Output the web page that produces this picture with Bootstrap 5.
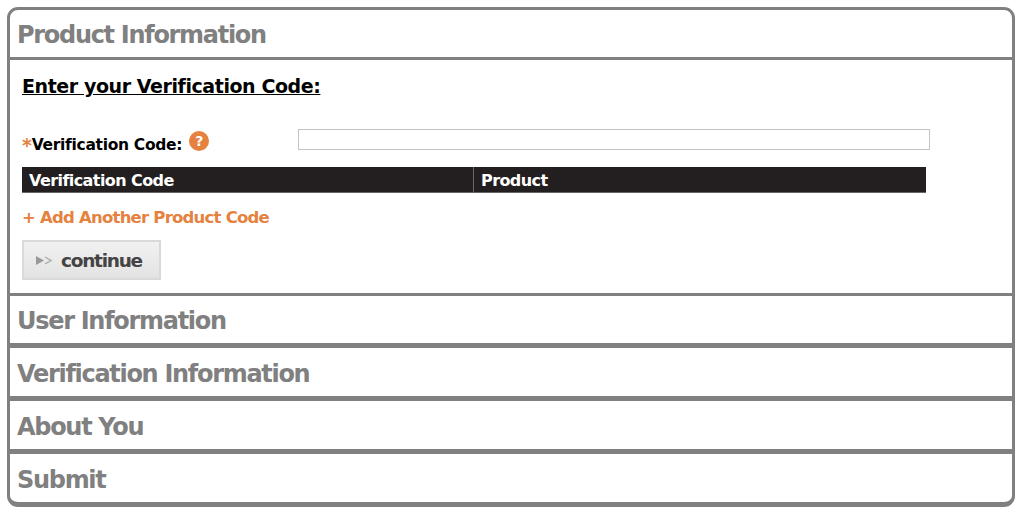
<!DOCTYPE html>
<html lang="en"><head><meta charset="utf-8"><title>Registration</title>
<link href="https://cdn.jsdelivr.net/npm/bootstrap@5.3.0/dist/css/bootstrap.min.css" rel="stylesheet">
<style>
html,body{height:520px;overflow:hidden;background:#fff}
body{font-family:"DejaVu Sans","Liberation Sans",sans-serif;font-weight:700;color:#000;padding:7px 9px 0 7px}
.shell{height:500px;border:3px solid #808080;border-bottom-width:5px;border-radius:11px;overflow:hidden}
.step-head{font-size:24px;letter-spacing:-1.3px;color:#808080;padding:4px 0 0 7px;line-height:1;margin:0;font-weight:700;flex:1 1 0}
.step-first{height:50px;flex:none;border-bottom:3px solid #808080}
.step-first .step-head{padding-top:3px}
.step-body{height:236px;flex:none;padding:0 0 0 12px;border-bottom:3px solid #808080}
.step-thick{height:53px;flex:none;border-bottom:5px solid #808080}
.step-top{height:52px}
.step-top .step-head{padding-top:2px}
.step-last{flex:1 1 0}
.enter-title{font-size:19px;letter-spacing:-.42px;text-decoration:underline;line-height:24px;margin:14px 0 0}
.code-row{height:21px;margin-top:31px}
.code-label{width:276px;font-size:15.5px;letter-spacing:-.3px;margin:0;padding-top:12px}
.star{color:#e5823f;font-size:19px;line-height:1}
.help-dot{width:20px;height:20px;border-radius:50%;background:#e5823f;color:#fff;font-size:14px;letter-spacing:0;line-height:20px;margin-left:7px;transform:translateY(-5px)}
.code-input{width:632px;height:21px;border:1px solid #c4c4c4;border-radius:0;padding:0;background:#fff}
.code-table{width:904px;height:26px;margin-top:17px;background:#231f20;color:#fff;font-size:16px;letter-spacing:-.58px;border-bottom:1px solid #666}
.code-cell{padding-left:7px;line-height:27px}
.code-first{width:452px;border-right:1px solid #666}
.add-link{color:#e5823f;font-size:16.5px;letter-spacing:-.78px;text-decoration:none;margin-top:13px;line-height:24px;display:block}
.go-btn{width:139px;height:40px;margin-top:10px;background:linear-gradient(#f1f1f1,#e3e3e3);border:2px solid #d9d9d9;border-radius:0;color:#444;font-size:18.5px;font-weight:700;letter-spacing:-1.25px;padding:1px 0 0 12px;gap:9px}
</style></head>
<body>
<div class="shell d-flex flex-column">
  <div class="step-first d-flex align-items-center"><h2 class="step-head">Product Information</h2></div>
  <div class="step-body">
    <p class="enter-title">Enter your Verification Code:</p>
    <div class="code-row d-flex align-items-center">
      <label class="code-label d-flex align-items-center" for="vcode"><span class="star">*</span>Verification Code:<span class="help-dot d-inline-block text-center">?</span></label>
      <input id="vcode" class="code-input" type="text">
    </div>
    <div class="code-table d-flex"><div class="code-cell code-first">Verification Code</div><div class="code-cell">Product</div></div>
    <a class="add-link" href="#">+ Add Another Product Code</a>
    <button class="go-btn btn d-flex align-items-center" type="button">
      <svg width="16" height="9" viewBox="0 0 16 9" aria-hidden="true"><path d="M0 0l8 4.5L0 9z" fill="#999"/><path d="M9 1l6 3.5L9 8" fill="none" stroke="#aaa" stroke-width="1.3"/></svg>
      <span>continue</span>
    </button>
  </div>
  <div class="step-thick step-top d-flex align-items-center"><h2 class="step-head">User Information</h2></div>
  <div class="step-thick d-flex align-items-center"><h2 class="step-head">Verification Information</h2></div>
  <div class="step-thick d-flex align-items-center"><h2 class="step-head">About You</h2></div>
  <div class="step-last d-flex align-items-center"><h2 class="step-head">Submit</h2></div>
</div>
</body></html>
